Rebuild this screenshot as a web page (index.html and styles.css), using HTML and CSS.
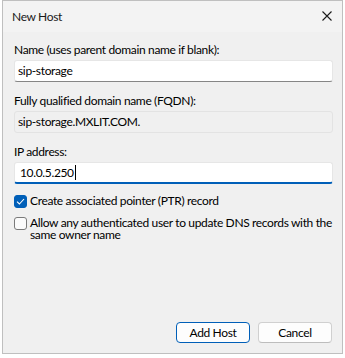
FILE: index.html
```html
<!DOCTYPE html>
<html>
<head>
<meta charset="utf-8">
<link rel="stylesheet" href="styles.css">
</head>
<body>
<div class="window">
  <div class="titlebar">
    <span class="title">New Host</span>
    <svg class="close" width="10" height="10" viewBox="0 0 10 10"><path d="M0.5 0.5 L9.5 9.5 M9.5 0.5 L0.5 9.5" stroke="#1a1a1a" stroke-width="1.1" fill="none"/></svg>
  </div>
  <div class="content">
    <div class="label">Name (uses parent domain name if blank):</div>
    <div class="field edit">sip-storage</div>
    <div class="label l2">Fully qualified domain name (FQDN):</div>
    <div class="field readonly">sip-storage.MXLIT.COM.</div>
    <div class="label l2">IP address:</div>
    <div class="field focus">10.0.5.250<span class="caret"></span></div>
    <div class="check first">
      <span class="box checked"><svg width="9" height="7" viewBox="0 0 9 7"><path d="M1 3.6 L3.4 6 L8 1" stroke="#fff" stroke-width="1.1" fill="none"/></svg></span>
      <span class="ctext">Create associated pointer (PTR) record</span>
    </div>
    <div class="check">
      <span class="box"></span>
      <span class="ctext">Allow any authenticated user to update DNS records with the same owner name</span>
    </div>
  </div>
  <div class="buttons">
    <div class="btn default">Add Host</div>
    <div class="btn">Cancel</div>
  </div>
</div>
</body>
</html>
```
FILE: styles.css
```css
html, body {
  margin: 0;
  padding: 0;
  background: #ffffff;
}
body {
  font-family: "Lato", "Noto Sans", sans-serif;
  font-size: 12px;
  letter-spacing: -0.35px;
  color: #000;
}
.window {
  margin-left: 2px;
  width: 341px;
  height: 354px;
  box-sizing: border-box;
  border: 1px solid #bfbfbf;
  background: #f0f0f0;
  display: flex;
  flex-direction: column;
}
.titlebar {
  height: 31px;
  background: #f3f3f3;
  display: flex;
  align-items: center;
  justify-content: space-between;
  padding: 0 10px 0 9px;
  flex: none;
}
.title {
  font-size: 12px;
  color: #1a1a1a;
}
.close {
  display: block;
  margin-top: -1px;
}
.content {
  padding: 10px 9px 0 11px;
  flex: 1;
}
.label {
  height: 16px;
  line-height: 16px;
  margin-bottom: 2px;
  color: #000;
}
.l2 {
  margin-top: 11px;
}
.field {
  height: 22px;
  box-sizing: border-box;
  border: 1px solid #e6e6e6;
  border-radius: 3px;
  padding: 0 3px;
  line-height: 20px;
  display: flex;
  align-items: center;
}
.edit {
  background: #ffffff;
  border-bottom: 1px solid #868686;
}
.readonly {
  background: #f0f0f0;
  border-color: #e3e3e3;
}
.focus {
  background: #ffffff;
  border-bottom: 2px solid #005fb8;
  padding-left: 5px;
}
.caret {
  display: inline-block;
  width: 1px;
  height: 15px;
  background: #000;
  margin-left: 1px;
}
.check {
  display: flex;
  align-items: flex-start;
  margin-top: 8px;
}
.check.first {
  margin-top: 10px;
}
.box {
  width: 13px;
  height: 13px;
  box-sizing: border-box;
  border: 1px solid #7a7a7a;
  border-radius: 3px;
  background: #fbfbfb;
  flex: none;
  margin-top: 1px;
  margin-right: 3px;
  display: flex;
  align-items: center;
  justify-content: center;
}
.box.checked {
  background: #005fb8;
  border-color: #005fb8;
}
.ctext {
  line-height: 12px;
  padding-top: 1px;
}
.buttons {
  display: flex;
  justify-content: flex-end;
  gap: 8px;
  padding: 0 10px 10px 0;
}
.btn {
  width: 74px;
  height: 21px;
  box-sizing: border-box;
  border: 1px solid #d0d0d0;
  border-bottom-color: #bdbdbd;
  border-radius: 4px;
  background: #fdfdfd;
  text-align: center;
  line-height: 19px;
}
.btn.default {
  border-color: #005fb8;
}
```
